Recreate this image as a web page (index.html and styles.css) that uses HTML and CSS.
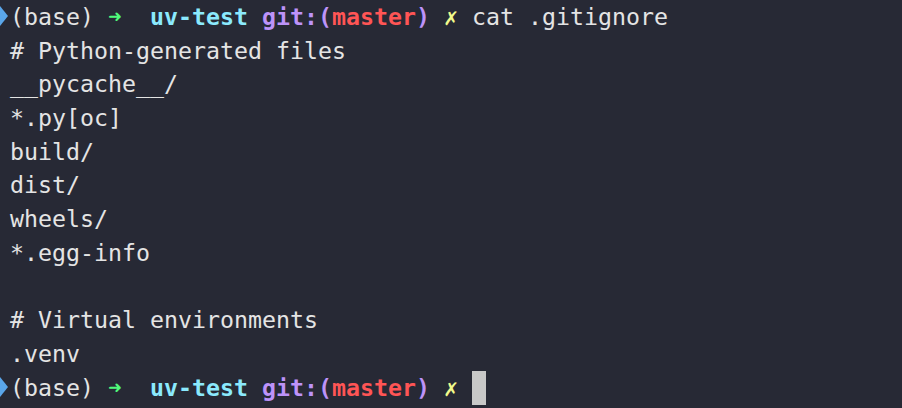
FILE: index.html
```html
<!DOCTYPE html>
<html>
<head>
<meta charset="utf-8">
<link rel="stylesheet" href="styles.css">
</head>
<body>
<div class="term">
<div class="line prompt"><span class="mark"></span><span>(base) </span><span class="arrow">➜</span><span>  </span><span class="dir">uv-test</span> <span class="git">git:(</span><span class="branch">master</span><span class="git">)</span> <span class="dirty">✗</span> cat .gitignore</div>
<div class="line"># Python-generated files</div>
<div class="line">__pycache__/</div>
<div class="line">*.py[oc]</div>
<div class="line">build/</div>
<div class="line">dist/</div>
<div class="line">wheels/</div>
<div class="line">*.egg-info</div>
<div class="line"> </div>
<div class="line"># Virtual environments</div>
<div class="line">.venv</div>
<div class="line prompt"><span class="mark"></span><span>(base) </span><span class="arrow">➜</span><span>  </span><span class="dir">uv-test</span> <span class="git">git:(</span><span class="branch">master</span><span class="git">)</span> <span class="dirty">✗</span> <span class="cursor"> </span></div>
</div>
</body>
</html>
```
FILE: styles.css
```css
html, body {
  margin: 0;
  padding: 0;
  background: #272935;
  width: 902px;
  height: 408px;
  overflow: hidden;
}
.term {
  padding: 0 0 0 10px;
  font-family: "DejaVu Sans Mono", "Liberation Mono", monospace;
  font-size: 23.25px;
  color: #e4e4e4;
}
.line {
  position: relative;
  height: 33.7px;
  line-height: 33.7px;
  white-space: pre;
}
.mark {
  position: absolute;
  left: -10px;
  top: 6px;
  width: 0;
  height: 0;
  border-top: 10px solid transparent;
  border-bottom: 10px solid transparent;
  border-left: 8px solid #5aa6ea;
}
.arrow {
  display: inline-block;
  width: 14px;
  height: 33.7px;
  overflow: visible;
  color: #50fa7b;
  font-weight: bold;
  font-size: 22px;
  line-height: 33.7px;
  text-align: center;
  vertical-align: top;
}
.dir { color: #8be9fd; font-weight: bold; }
.git { color: #bd93f9; font-weight: bold; }
.branch { color: #ff5555; font-weight: bold; }
.dirty { color: #f1fa8c; font-weight: bold; }
.cursor {
  display: inline-block;
  width: 14px;
  height: 34px;
  background: #c8c8c8;
  vertical-align: top;
}
```
